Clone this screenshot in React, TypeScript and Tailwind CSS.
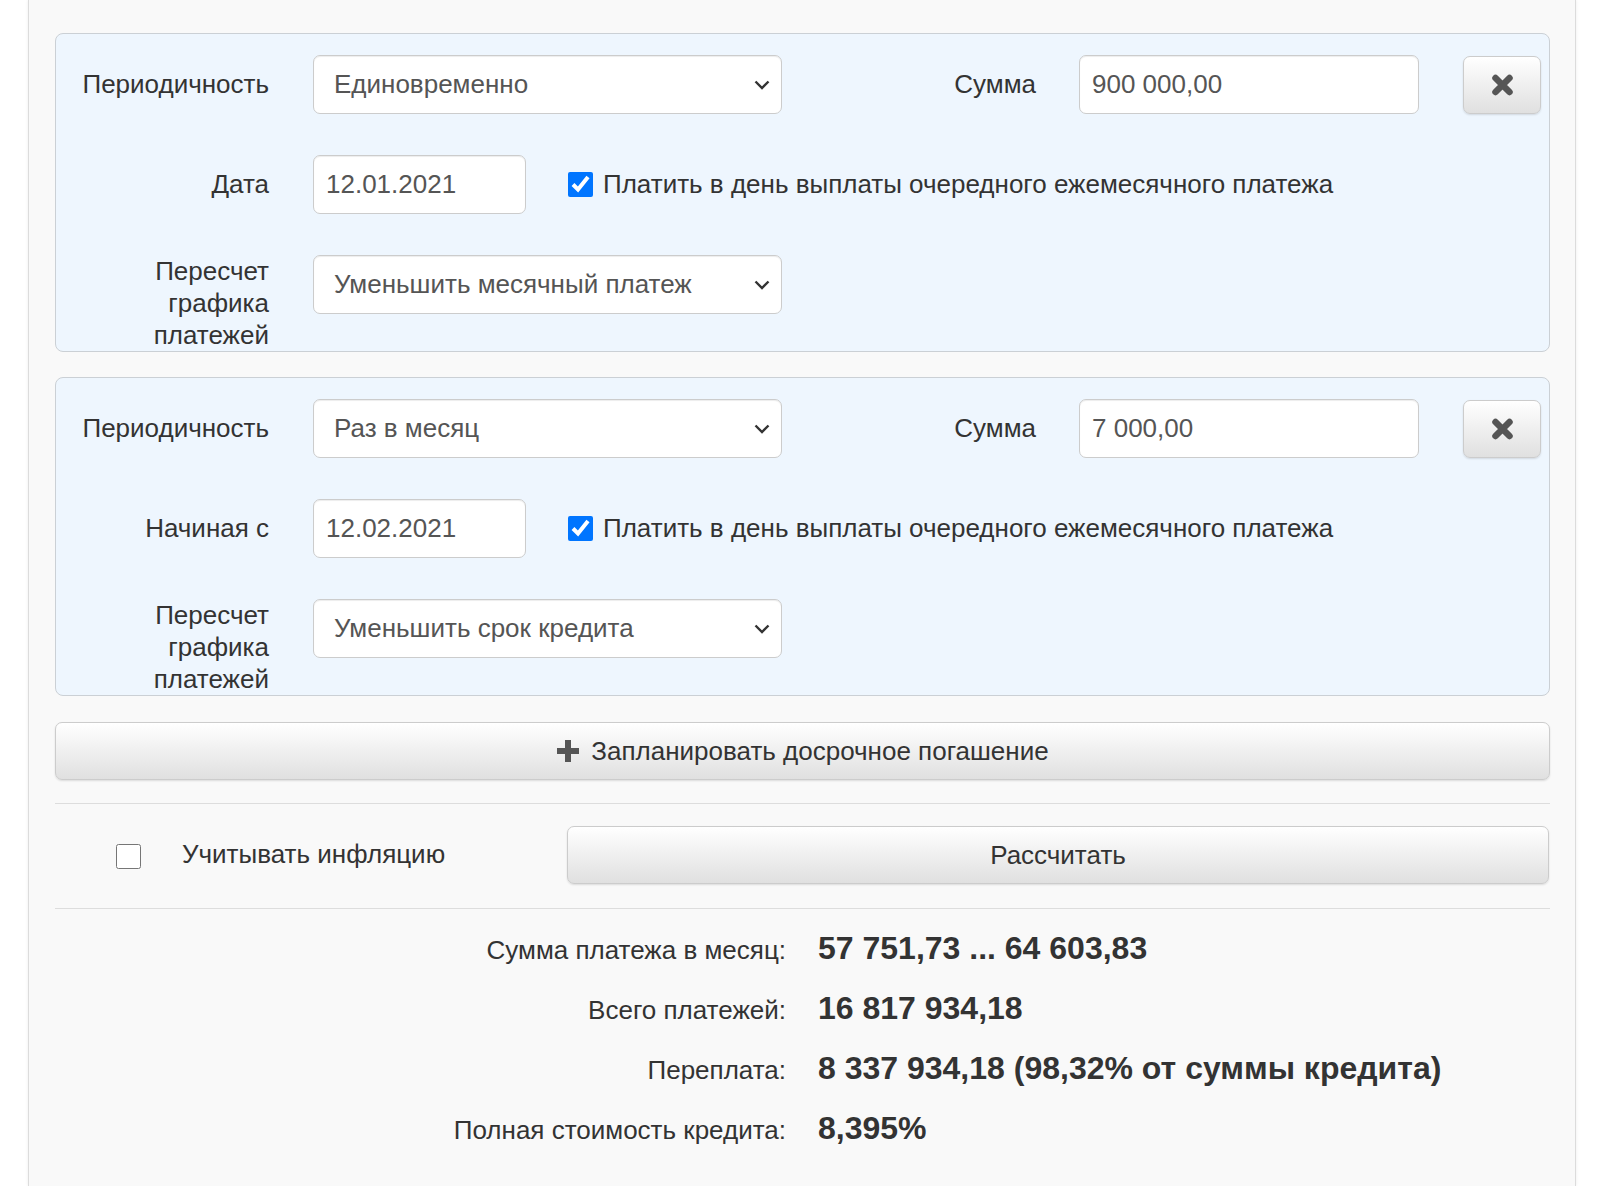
import { ReactNode } from "react";

const btn =
  "border border-[#ccc] rounded-[7px] bg-gradient-to-b from-white to-[#e0e0e0] shadow-[inset_0_1px_0_rgba(255,255,255,0.15),0_1px_2px_rgba(0,0,0,0.12)] text-[#333]";

const Chevron = () => (
  <svg width="16" height="10" viewBox="0 0 16 10" className="absolute right-[11px] top-1/2 -translate-y-1/2">
    <polyline points="1.5,1.5 8,8 14.5,1.5" fill="none" stroke="#333" strokeWidth="2.4" />
  </svg>
);

const Select = ({ value }: { value: string }) => (
  <div className="relative w-[469px] h-[59px] shrink-0 rounded-[7px] border border-[#ccc] bg-white shadow-[inset_0_1px_1px_rgba(0,0,0,0.075)] flex items-center pl-[20px] text-[#555]">
    {value}
    <Chevron />
  </div>
);

const Input = ({ value, w }: { value: string; w: string }) => (
  <div className={`${w} h-[59px] shrink-0 rounded-[7px] border border-[#ccc] bg-white shadow-[inset_0_1px_1px_rgba(0,0,0,0.075)] flex items-center pl-[12px] text-[#555]`}>
    {value}
  </div>
);

const Check = ({ checked }: { checked: boolean }) => (
  <input
    type="checkbox"
    defaultChecked={checked}
    className="w-[25px] h-[25px] shrink-0 m-0 accent-[#0075ff]"
  />
);

const RemoveIcon = () => (
  <svg width="23" height="22" viewBox="0 0 23 22">
    <path d="M4.5 4 L18.5 18 M18.5 4 L4.5 18" stroke="#555" strokeWidth="6.5" strokeLinecap="round" />
  </svg>
);

const PlusIcon = () => (
  <svg width="24" height="24" viewBox="0 0 24 24">
    <path d="M9 1h6v8h8v6h-8v8H9v-8H1V9h8z" fill="#555" />
  </svg>
);

const Label = ({ children }: { children: ReactNode }) => (
  <div className="w-[213px] shrink-0 text-right">{children}</div>
);

type Pogashenie = {
  period: string;
  summa: string;
  dateLabel: string;
  date: string;
  pereschet: string;
};

const items: Pogashenie[] = [
  { period: "Единовременно", summa: "900 000,00", dateLabel: "Дата", date: "12.01.2021", pereschet: "Уменьшить месячный платеж" },
  { period: "Раз в месяц", summa: "7 000,00", dateLabel: "Начиная с", date: "12.02.2021", pereschet: "Уменьшить срок кредита" },
];

const Panel = ({ p }: { p: Pogashenie }) => (
  <div className="rounded-[8px] border border-[#cbd0d5] bg-[#eef6fe] pt-[21px]">
    <div className="flex items-center">
      <Label>Периодичность</Label>
      <div className="ml-[44px]">
        <Select value={p.period} />
      </div>
      <div className="w-[254px] shrink-0 text-right">Сумма</div>
      <div className="ml-[43px]">
        <Input value={p.summa} w="w-[340px]" />
      </div>
      <button className={`${btn} ml-[44px] w-[78px] h-[58px] flex items-center justify-center`}>
        <RemoveIcon />
      </button>
    </div>
    <div className="flex items-center mt-[41px]">
      <Label>{p.dateLabel}</Label>
      <div className="ml-[44px]">
        <Input value={p.date} w="w-[213px]" />
      </div>
      <label className="ml-[42px] flex items-center gap-[10px]">
        <Check checked />
        <span>Платить в день выплаты очередного ежемесячного платежа</span>
      </label>
    </div>
    <div className="flex items-start mt-[41px]">
      <div className="w-[213px] shrink-0 text-right leading-[32px]">
        Пересчет
        <br />
        графика
        <br />
        платежей
      </div>
      <div className="ml-[44px]">
        <Select value={p.pereschet} />
      </div>
    </div>
  </div>
);

const results = [
  ["Сумма платежа в месяц:", "57 751,73 ... 64 603,83"],
  ["Всего платежей:", "16 817 934,18"],
  ["Переплата:", "8 337 934,18 (98,32% от суммы кредита)"],
  ["Полная стоимость кредита:", "8,395%"],
];

export default function App() {
  return (
    <div className="min-h-screen bg-white font-['Liberation_Sans',Arial,sans-serif] text-[26px] text-[#333]">
      <div className="ml-[28px] w-[1548px] min-h-[1186px] border-x border-[#dcdcdc] bg-[#f9f9f9] pl-[26px] pr-[25px] pt-[33px] shadow-[0_0_3px_rgba(0,0,0,0.08)]">
        <div className="flex flex-col gap-[25px]">
          {items.map((p, i) => (
            <Panel key={i} p={p} />
          ))}
        </div>

        <button className={`${btn} mt-[26px] w-full h-[58px] flex items-center justify-center gap-[11px]`}>
          <PlusIcon />
          Запланировать досрочное погашение
        </button>

        <div className="mt-[23px] border-t border-[#ddd]" />

        <div className="flex items-center h-[104px]">
          <div className="w-[512px] shrink-0 flex items-center">
            <input type="checkbox" className="ml-[61px] w-[25px] h-[25px] m-0 accent-[#0075ff]" />
            <span className="ml-[41px] -mt-[4px]">Учитывать инфляцию</span>
          </div>
          <button className={`${btn} w-[982px] h-[58px] mb-[2px]`}>Рассчитать</button>
        </div>

        <div className="border-t border-[#ddd] pt-[3px]">
          {results.map(([k, v]) => (
            <div key={k} className="flex items-baseline h-[60px] pt-[12px]">
              <div className="w-[731px] shrink-0 text-right">{k}</div>
              <div className="ml-[32px] font-bold text-[32px]">{v}</div>
            </div>
          ))}
        </div>
      </div>
    </div>
  );
}
